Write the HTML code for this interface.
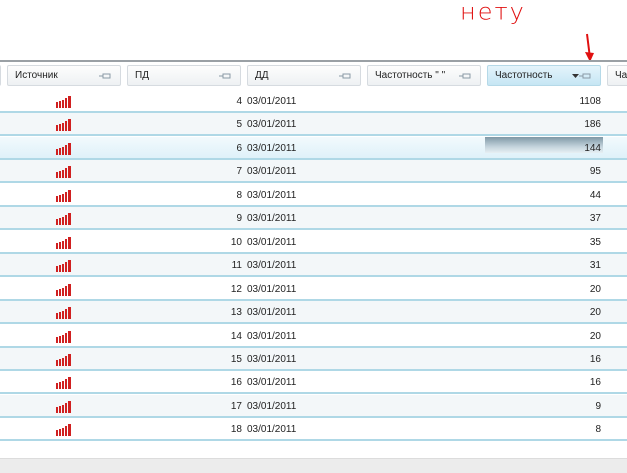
<!DOCTYPE html>
<html><head><meta charset="utf-8"><style>
body{margin:0;width:627px;height:472px;overflow:hidden;background:#fff;position:relative;font-family:"Liberation Sans","DejaVu Sans",sans-serif;font-size:10px;color:#222}
.a{position:absolute}
.hdr{position:absolute;top:65px;height:21px;border:1px solid #d6dbe0;border-radius:2px;background:linear-gradient(#fdfdfd,#eef1f3);box-sizing:border-box;line-height:20px;padding-left:7px;font-size:10px;color:#222}
.pin{position:absolute;right:9px;top:7px;width:12px;height:6px}
.row{position:absolute;left:0;width:627px;height:23px;border-bottom:2px solid #afd8e6;box-sizing:border-box}
.ic{position:absolute;left:56px;top:6px}
.n{position:absolute;right:385px;top:6px}
.d{position:absolute;left:247px;top:6px}
.v{position:absolute;right:26px;top:6px}
</style></head><body>
<div class="a" style="left:460px;top:-2px;color:#e01010;font-size:24px;font-family:'DejaVu Sans',sans-serif;letter-spacing:2px;font-weight:300;transform:scaleY(0.95)">нету</div>
<svg class="a" style="left:580px;top:32px" width="20" height="34"><path d="M7 2 L10 26" stroke="#e01010" stroke-width="2" fill="none"/><path d="M5 20 L10 30 L14 21 Z" fill="#e01010"/></svg>
<div class="a" style="left:0;top:60px;width:627px;height:2px;background:#9aa0a5"></div>
<div class="hdr" style="left:-10px;width:11px"></div>
<div class="hdr" style="left:7px;width:114px">Источник<svg class="pin" viewBox="0 0 12 6"><path d="M0 3H4M4 0.5V5.5M4 1H11V5H4" stroke="#8a9aa6" fill="none" stroke-width="1"/></svg></div>
<div class="hdr" style="left:127px;width:114px">ПД<svg class="pin" viewBox="0 0 12 6"><path d="M0 3H4M4 0.5V5.5M4 1H11V5H4" stroke="#8a9aa6" fill="none"/></svg></div>
<div class="hdr" style="left:247px;width:114px">ДД<svg class="pin" viewBox="0 0 12 6"><path d="M0 3H4M4 0.5V5.5M4 1H11V5H4" stroke="#8a9aa6" fill="none"/></svg></div>
<div class="hdr" style="left:367px;width:114px">Частотность " "<svg class="pin" viewBox="0 0 12 6"><path d="M0 3H4M4 0.5V5.5M4 1H11V5H4" stroke="#8a9aa6" fill="none"/></svg></div>
<div class="hdr" style="left:487px;width:114px;background:linear-gradient(#e4f4fb,#c6e6f4);border-color:#b5d9e8">Частотность<svg class="a" style="left:84px;top:8px" width="7" height="4"><path d="M0 0H7L3.5 4Z" fill="#333"/></svg><svg class="pin" viewBox="0 0 12 6"><path d="M0 3H4M4 0.5V5.5M4 1H11V5H4" stroke="#8a9aa6" fill="none"/></svg></div>
<div class="hdr" style="left:607px;width:40px">Час</div>
<div id="rows"></div>
<div class="a" style="left:0;top:458px;width:627px;height:14px;background:#ececec;border-top:1px solid #dcdcdc"></div>
<script>
var v=[1108,186,144,95,44,37,35,31,20,20,20,16,16,9,8],h='';
for(var i=0;i<15;i++){var t=90+i*23.45;var bg=i%2?'#f3f7f9':'#fff';if(i==2)bg='linear-gradient(#f2fafd,#dff1f9)';
h+='<div class="row" style="top:'+t+'px;background:'+bg+'">'+(i==2?'<div class="a" style="left:485px;top:0;width:118px;height:16px;background:linear-gradient(#7f98a6,#c3d3dc 60%,#e6eff3)"></div>':'')+
'<svg class="ic" width="16" height="12"><rect x="0" y="6" width="2" height="6" fill="#d02020"/><rect x="3" y="5" width="2" height="7" fill="#d02020"/><rect x="6" y="4" width="2" height="8" fill="#d02020"/><rect x="9" y="2" width="2" height="10" fill="#d02020"/><rect x="12" y="0" width="3" height="12" fill="#d02020"/></svg>'+
'<span class="n">'+(i+4)+'</span><span class="d">03/01/2011</span><span class="v" style="position:absolute">'+v[i]+'</span></div>';}
document.getElementById('rows').innerHTML=h;
</script>
</body></html>
